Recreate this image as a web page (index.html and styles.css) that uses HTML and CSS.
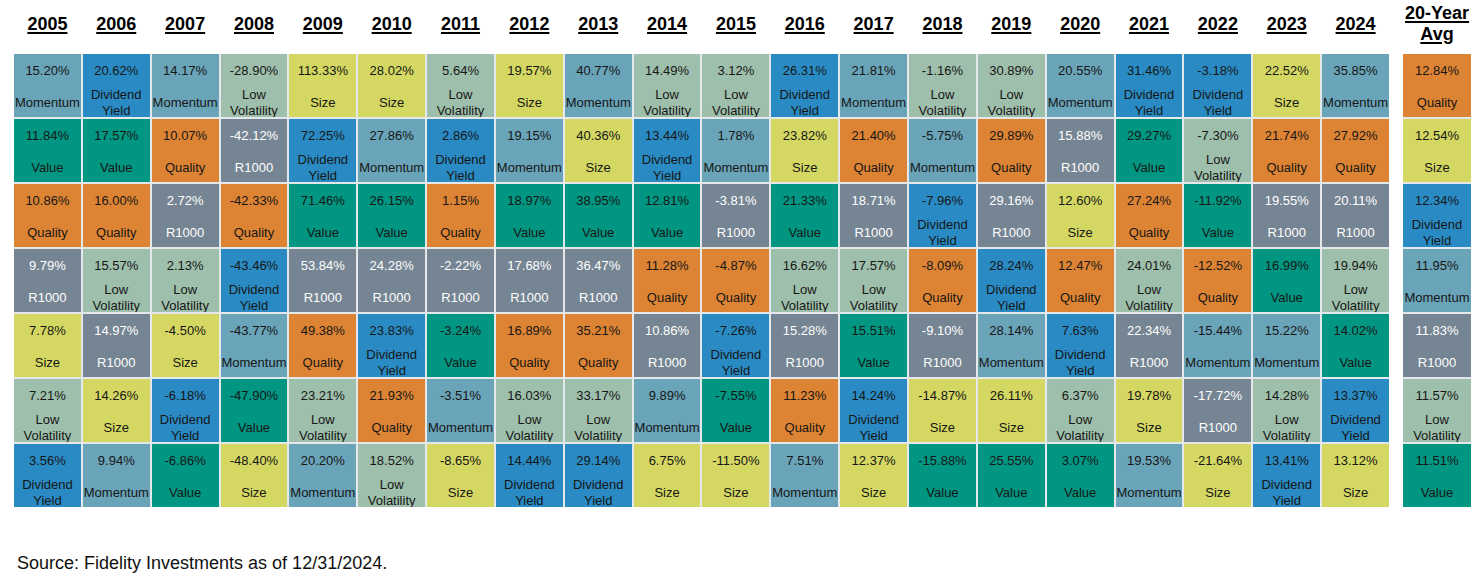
FILE: index.html
```html
<!DOCTYPE html>
<html>
<head>
<meta charset="utf-8">
<link rel="stylesheet" href="styles.css">
</head>
<body>
<div class="page">
  <div class="chart">
    <section class="years">
      <div class="heads">
        <div class="head">2005</div><div class="head">2006</div><div class="head">2007</div><div class="head">2008</div><div class="head">2009</div>
        <div class="head">2010</div><div class="head">2011</div><div class="head">2012</div><div class="head">2013</div><div class="head">2014</div>
        <div class="head">2015</div><div class="head">2016</div><div class="head">2017</div><div class="head">2018</div><div class="head">2019</div>
        <div class="head">2020</div><div class="head">2021</div><div class="head">2022</div><div class="head">2023</div><div class="head">2024</div>
      </div>
      <div class="grid" id="grid"></div>
    </section>
    <section class="avg">
      <div class="heads one"><div class="head">20-Year Avg</div></div>
      <div class="grid" id="avg"></div>
    </section>
  </div>
  <p class="source">Source: Fidelity Investments as of 12/31/2024.</p>
</div>
<script src="script.js"></script>
</body>
</html>
```
FILE: script.js
```js
const names = {mo:"Momentum", dy:"Dividend Yield", lv:"Low Volatility", sz:"Size", va:"Value", qu:"Quality", r1:"R1000"};
const cols = [
 [["15.20%","mo"],["11.84%","va"],["10.86%","qu"],["9.79%","r1"],["7.78%","sz"],["7.21%","lv"],["3.56%","dy"]],
 [["20.62%","dy"],["17.57%","va"],["16.00%","qu"],["15.57%","lv"],["14.97%","r1"],["14.26%","sz"],["9.94%","mo"]],
 [["14.17%","mo"],["10.07%","qu"],["2.72%","r1"],["2.13%","lv"],["-4.50%","sz"],["-6.18%","dy"],["-6.86%","va"]],
 [["-28.90%","lv"],["-42.12%","r1"],["-42.33%","qu"],["-43.46%","dy"],["-43.77%","mo"],["-47.90%","va"],["-48.40%","sz"]],
 [["113.33%","sz"],["72.25%","dy"],["71.46%","va"],["53.84%","r1"],["49.38%","qu"],["23.21%","lv"],["20.20%","mo"]],
 [["28.02%","sz"],["27.86%","mo"],["26.15%","va"],["24.28%","r1"],["23.83%","dy"],["21.93%","qu"],["18.52%","lv"]],
 [["5.64%","lv"],["2.86%","dy"],["1.15%","qu"],["-2.22%","r1"],["-3.24%","va"],["-3.51%","mo"],["-8.65%","sz"]],
 [["19.57%","sz"],["19.15%","mo"],["18.97%","va"],["17.68%","r1"],["16.89%","qu"],["16.03%","lv"],["14.44%","dy"]],
 [["40.77%","mo"],["40.36%","sz"],["38.95%","va"],["36.47%","r1"],["35.21%","qu"],["33.17%","lv"],["29.14%","dy"]],
 [["14.49%","lv"],["13.44%","dy"],["12.81%","va"],["11.28%","qu"],["10.86%","r1"],["9.89%","mo"],["6.75%","sz"]],
 [["3.12%","lv"],["1.78%","mo"],["-3.81%","r1"],["-4.87%","qu"],["-7.26%","dy"],["-7.55%","va"],["-11.50%","sz"]],
 [["26.31%","dy"],["23.82%","sz"],["21.33%","va"],["16.62%","lv"],["15.28%","r1"],["11.23%","qu"],["7.51%","mo"]],
 [["21.81%","mo"],["21.40%","qu"],["18.71%","r1"],["17.57%","lv"],["15.51%","va"],["14.24%","dy"],["12.37%","sz"]],
 [["-1.16%","lv"],["-5.75%","mo"],["-7.96%","dy"],["-8.09%","qu"],["-9.10%","r1"],["-14.87%","sz"],["-15.88%","va"]],
 [["30.89%","lv"],["29.89%","qu"],["29.16%","r1"],["28.24%","dy"],["28.14%","mo"],["26.11%","sz"],["25.55%","va"]],
 [["20.55%","mo"],["15.88%","r1"],["12.60%","sz"],["12.47%","qu"],["7.63%","dy"],["6.37%","lv"],["3.07%","va"]],
 [["31.46%","dy"],["29.27%","va"],["27.24%","qu"],["24.01%","lv"],["22.34%","r1"],["19.78%","sz"],["19.53%","mo"]],
 [["-3.18%","dy"],["-7.30%","lv"],["-11.92%","va"],["-12.52%","qu"],["-15.44%","mo"],["-17.72%","r1"],["-21.64%","sz"]],
 [["22.52%","sz"],["21.74%","qu"],["19.55%","r1"],["16.99%","va"],["15.22%","mo"],["14.28%","lv"],["13.41%","dy"]],
 [["35.85%","mo"],["27.92%","qu"],["20.11%","r1"],["19.94%","lv"],["14.02%","va"],["13.37%","dy"],["13.12%","sz"]]
];
const avg = [["12.84%","qu"],["12.54%","sz"],["12.34%","dy"],["11.95%","mo"],["11.83%","r1"],["11.57%","lv"],["11.51%","va"]];
function cell(d){
  const c = document.createElement("div");
  c.className = "cell " + d[1];
  const p = document.createElement("span"); p.className = "pct"; p.textContent = d[0];
  const l = document.createElement("span"); l.className = "lbl"; l.textContent = names[d[1]];
  c.append(p, l);
  return c;
}
const g = document.getElementById("grid");
cols.forEach(col => col.forEach(d => g.appendChild(cell(d))));
const a = document.getElementById("avg");
avg.forEach(d => a.appendChild(cell(d)));
```
FILE: styles.css
```css
* { box-sizing: border-box; }
body {
  margin: 0;
  background: #ffffff;
  font-family: "Liberation Sans", Arial, sans-serif;
  color: #000;
}
.page {
  padding: 0 0 0 14px;
  width: 1483px;
  height: 574px;
}
.chart {
  display: flex;
  gap: 14px;
  align-items: flex-start;
}
.years { width: 1375px; }
.avg { width: 68px; }
.heads {
  display: grid;
  grid-template-columns: repeat(20, 1fr);
  column-gap: 2px;
  height: 48px;
  margin-bottom: 6px;
  align-items: center;
}
.heads.one { grid-template-columns: 1fr; }
.head {
  font-size: 18px;
  font-weight: bold;
  line-height: 21px;
  text-align: center;
  text-decoration: underline;
  text-underline-offset: 2px;
  text-decoration-thickness: 2px;
}
.grid {
  display: grid;
  grid-template-rows: repeat(7, 63px);
  grid-auto-flow: column;
  grid-auto-columns: 1fr;
  gap: 2px;
  background: #e4e8ea;
}
.cell {
  display: grid;
  grid-template-rows: 35px 28px;
  text-align: center;
  font-size: 13px;
  color: #161616;
  overflow: hidden;
}
.pct { align-self: center; line-height: 16px; margin-bottom: 2px; }
.lbl { align-self: center; line-height: 16px; }
.mo { background: #6aa4b9; }
.dy { background: #2a8bc4; }
.lv { background: #9ebfab; }
.sz { background: #d4d862; }
.va { background: #009682; }
.qu { background: #dd8434; }
.r1 { background: #768593; color: #ffffff; }
.source {
  margin: 46px 0 0 3px;
  font-size: 18px;
  line-height: 21px;
  color: #111;
}
```
